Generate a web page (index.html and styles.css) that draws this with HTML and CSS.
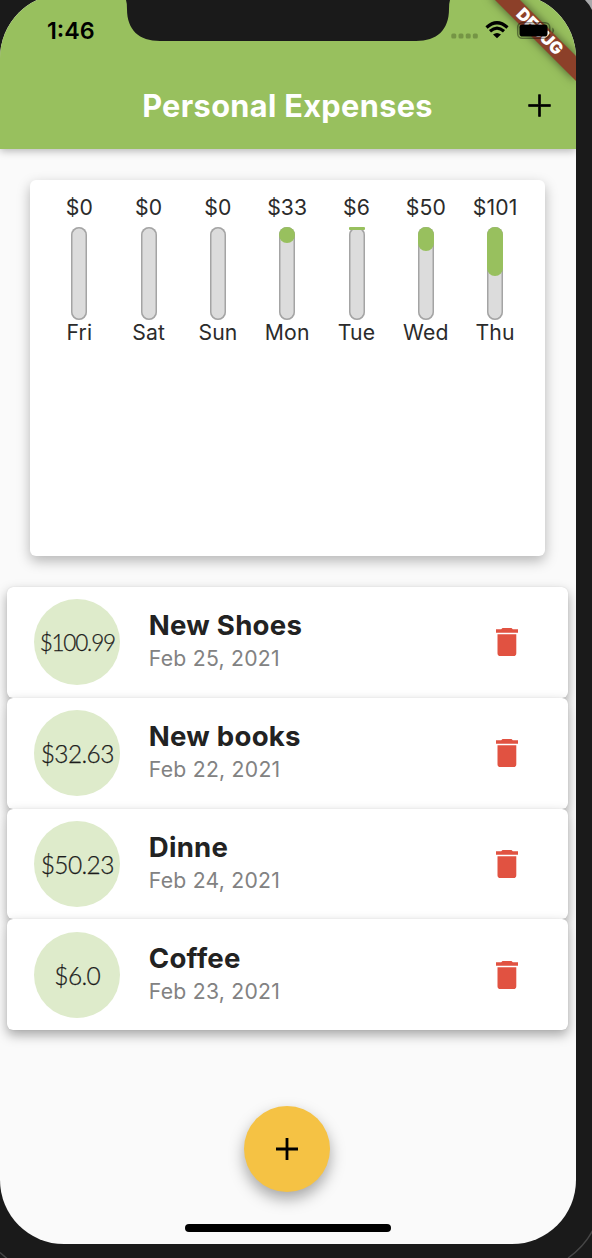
FILE: index.html
```html
<!DOCTYPE html>
<html lang="en">
<head>
<meta charset="utf-8">
<title>Personal Expenses</title>
<link rel="stylesheet" href="styles.css">
</head>
<body>
<div class="device">
  <main class="screen">
    <header class="app-bar">
      <div class="status-bar">
        <span class="clock">1:46</span>
      </div>
      <div class="toolbar">
        <h1 class="title">Personal Expenses</h1>
        <svg class="toolbar-add" viewBox="0 0 24 24"><path d="M11.2 3h1.6v8.2H21v1.6h-8.2V21h-1.6v-8.2H3v-1.6h8.2z"/></svg>
      </div>
    </header>

    <section class="chart">
      <div class="day"><span class="sum">$0</span><div class="bar"></div><span class="label">Fri</span></div>
      <div class="day"><span class="sum">$0</span><div class="bar"></div><span class="label">Sat</span></div>
      <div class="day"><span class="sum">$0</span><div class="bar"></div><span class="label">Sun</span></div>
      <div class="day"><span class="sum">$33</span><div class="bar"><div class="fill" style="height:16px"></div></div><span class="label">Mon</span></div>
      <div class="day"><span class="sum">$6</span><div class="bar"><div class="fill fill-thin" style="height:3px"></div></div><span class="label">Tue</span></div>
      <div class="day"><span class="sum">$50</span><div class="bar"><div class="fill" style="height:24.5px"></div></div><span class="label">Wed</span></div>
      <div class="day"><span class="sum">$101</span><div class="bar"><div class="fill" style="height:49px"></div></div><span class="label">Thu</span></div>
    </section>

    <section class="list">
      <article class="item">
        <div class="amount amount-long">$100.99</div>
        <div class="info"><h2>New Shoes</h2><p>Feb 25, 2021</p></div>
        <svg class="trash" viewBox="0 0 22 28"><path d="M6.5 0h9l1.3 1.3H22v3.5H0V1.300h5.200zM1.500 6.300h18.800v18.900q0 2.800-2.800 2.800H4.300q-2.800 0-2.800-2.800z"/></svg>
      </article>
      <article class="item">
        <div class="amount">$32.63</div>
        <div class="info"><h2>New books</h2><p>Feb 22, 2021</p></div>
        <svg class="trash" viewBox="0 0 22 28"><path d="M6.5 0h9l1.3 1.3H22v3.5H0V1.300h5.200zM1.500 6.300h18.800v18.900q0 2.800-2.800 2.800H4.300q-2.800 0-2.800-2.800z"/></svg>
      </article>
      <article class="item">
        <div class="amount">$50.23</div>
        <div class="info"><h2>Dinne</h2><p>Feb 24, 2021</p></div>
        <svg class="trash" viewBox="0 0 22 28"><path d="M6.5 0h9l1.3 1.3H22v3.5H0V1.300h5.200zM1.500 6.300h18.800v18.900q0 2.800-2.800 2.800H4.300q-2.800 0-2.800-2.800z"/></svg>
      </article>
      <article class="item">
        <div class="amount">$6.0</div>
        <div class="info"><h2>Coffee</h2><p>Feb 23, 2021</p></div>
        <svg class="trash" viewBox="0 0 22 28"><path d="M6.5 0h9l1.3 1.3H22v3.5H0V1.300h5.200zM1.500 6.300h18.800v18.900q0 2.800-2.800 2.800H4.300q-2.800 0-2.800-2.800z"/></svg>
      </article>
    </section>

    <button class="fab" aria-label="Add">
      <svg class="fab-icon" viewBox="0 0 22 22"><path d="M9.600 0h2.800v9.600H22v2.800h-9.600V22H9.600v-9.600H0V9.600h9.600z"/></svg>
    </button>
    <div class="home-indicator"></div>

    <!-- debug ribbon -->
    <svg class="ribbon" viewBox="0 0 126 130">
      <path class="ribbon-band" d="M39 -6L126 81V56L64 -6z"/>
      <text class="ribbon-text" transform="translate(90 31.500) rotate(45)" x="0" y="6" text-anchor="middle" textLength="58" lengthAdjust="spacingAndGlyphs">DEBUG</text>
    </svg>
    <!-- cellular dots, wifi, battery -->
    <svg class="indicators" viewBox="0 0 110 30">
      <g class="dots"><rect x="1.300" y="18.600" width="5" height="5" rx="1.500"/><rect x="8.500" y="18.600" width="5" height="5" rx="1.500"/><rect x="15.700" y="18.600" width="5" height="5" rx="1.500"/><rect x="22.800" y="18.600" width="5" height="5" rx="1.500"/></g>
      <g class="wifi"><path d="M36.500 12.500Q47 3 57.500 12.500"/><path d="M40 16.200Q47 10 54 16.200"/></g>
      <path d="M43 19.600Q47 16.400 51 19.600L47 23.300z"/>
      <rect class="battery-case" x="67.700" y="7.700" width="32" height="15.600" rx="4.500"/>
      <rect x="69.500" y="9.500" width="28" height="12" rx="2.800"/>
      <path class="battery-cap" d="M102.300 12.600q1.800 1 1.800 2.900t-1.800 2.900z"/>
    </svg>
  </main>

  <svg class="frame" viewBox="0 0 592 1258">
    <path class="bezel" d="M126 0Q127 3 127 9C127 30 139 41 160 41H416C437 41 449 30 449 9Q449 3 450 0z"/>
    <path class="outside" d="M585 0Q590 5 592 10V0z"/>
    <path class="rim" d="M0 1252.500L7 1258.500M568 1258Q584 1247 593 1230"/>
  </svg>
</div>
</body>
</html>
```

FILE: styles.css
```css
* { box-sizing: border-box; }
body { margin: 0; font-family: Inter, "Liberation Sans", sans-serif; }
h1, h2, p { margin: 0; }

.device {
  position: relative;
  width: 592px;
  height: 1258px;
  overflow: hidden;
  background: #1a1a1a;
  display: flex;
  align-items: flex-start;
}
.screen {
  position: relative;
  width: 576px;
  height: 1250px;
  margin-top: -6px;
  border-radius: 64px;
  overflow: hidden;
  background: #fafafa;
  display: flex;
  flex-direction: column;
  align-items: center;
}

.app-bar {
  width: 100%;
  height: 155px;
  padding-top: 6px;
  background: #98c05e;
  box-shadow: 0 2px 8px rgba(0, 0, 0, .28);
}
.status-bar { height: 62px; padding: 16px 0 0 47px; }
.clock { display: block; font-size: 23.300px; line-height: 30px; font-weight: 600; }
.toolbar {
  height: 87px;
  display: grid;
  grid-template-columns: 74px 1fr 74px;
  align-items: center;
}
.title {
  grid-column: 2;
  text-align: center;
  color: #fff;
  font-size: 30.7px;
  line-height: 40px;
  font-weight: 700;
  letter-spacing: .35px;
  padding-right: 1px;
}
.toolbar-add { width: 29px; height: 29px; justify-self: center; stroke: #000; stroke-width: .6; }

.chart {
  width: 515.500px;
  height: 376.500px;
  margin: 30.500px 1px 0 0;
  padding: 15.500px 15.500px 15px 15px;
  display: flex;
  border-radius: 6px;
  background: #fff;
  box-shadow: 0 5px 13px rgba(0, 0, 0, .28);
}
.day {
  flex: 1 1 0;
  display: flex;
  flex-direction: column;
  align-items: center;
  color: #2b2b2b;
  font-size: 21.200px;
  line-height: 25px;
  letter-spacing: .15px;
}
.bar {
  width: 16px;
  height: 93px;
  margin: 6.500px 0 0;
  border-radius: 8px;
  background: #dcdcdc;
  box-shadow: inset 0 0 0 1.500px #a4a4a4;
}
.fill { width: 16px; border-radius: 8px; background: #98c05e; }
.fill-thin { border-radius: 1px; }

.list { width: 561.500px; margin: 31px 1px 0 0; }
.item {
  height: 110.800px;
  padding: 0 50.500px 0 27.500px;
  display: flex;
  align-items: center;
  border-radius: 6px;
  background: #fff;
  box-shadow: 0 5px 12px rgba(0, 0, 0, .34), 0 0 1px rgba(0, 0, 0, .18);
}
.amount {
  width: 86px;
  height: 86px;
  border-radius: 50%;
  background: #deebcb;
  color: #1c1c1c;
  text-align: center;
  font: 300 24.500px/87px Lato, sans-serif;
  letter-spacing: -.6px;
  -webkit-text-stroke: .25px #1c1c1c;
}
.amount-long { font-size: 22.500px; letter-spacing: -1.200px; }
.info { flex: 1; margin: -1px 0 0 28.500px; }
.info h2 {
  color: #222;
  font-size: 27.600px;
  line-height: 33px;
  font-weight: 700;
  letter-spacing: .25px;
}
.info p {
  color: #828282;
  font-size: 21.200px;
  line-height: 32px;
  letter-spacing: .25px;
}
.trash { width: 22px; height: 28px; fill: #e15241; }

.fab {
  width: 86px;
  height: 86px;
  margin: 75.500px 2px 0 0;
  padding: 0;
  border: 0;
  border-radius: 50%;
  background: #f5c244;
  box-shadow: 0 7px 15px rgba(0, 0, 0, .34);
  display: flex;
  align-items: center;
  justify-content: center;
}
.fab-icon { width: 22px; height: 22px; }
.home-indicator { width: 206px; height: 8px; margin-top: 32px; border-radius: 4px; background: #000; }

.ribbon { position: absolute; top: 6px; left: 450px; width: 126px; height: 130px; }
.ribbon-band { fill: #8c4029; filter: drop-shadow(0 0 5px rgba(0, 0, 0, .55)); }
.ribbon-text { fill: #fff; font-family: Inter, sans-serif; font-size: 17px; font-weight: 900; }
.indicators { position: absolute; top: 21px; left: 450px; width: 110px; height: 30px; }
.dots { fill: #759545; }
.wifi { fill: none; stroke: #000; stroke-width: 3.200; }
.battery-case { fill: none; stroke: #000; stroke-opacity: .4; stroke-width: 1.500; }
.battery-cap { fill-opacity: .4; }

.frame { position: absolute; top: 0; left: 0; width: 592px; height: 1258px; }
.bezel { fill: #1a1a1a; }
.outside { fill: #a9a9ab; }
.rim { fill: none; stroke: #464646; stroke-width: 1.500; }
```
